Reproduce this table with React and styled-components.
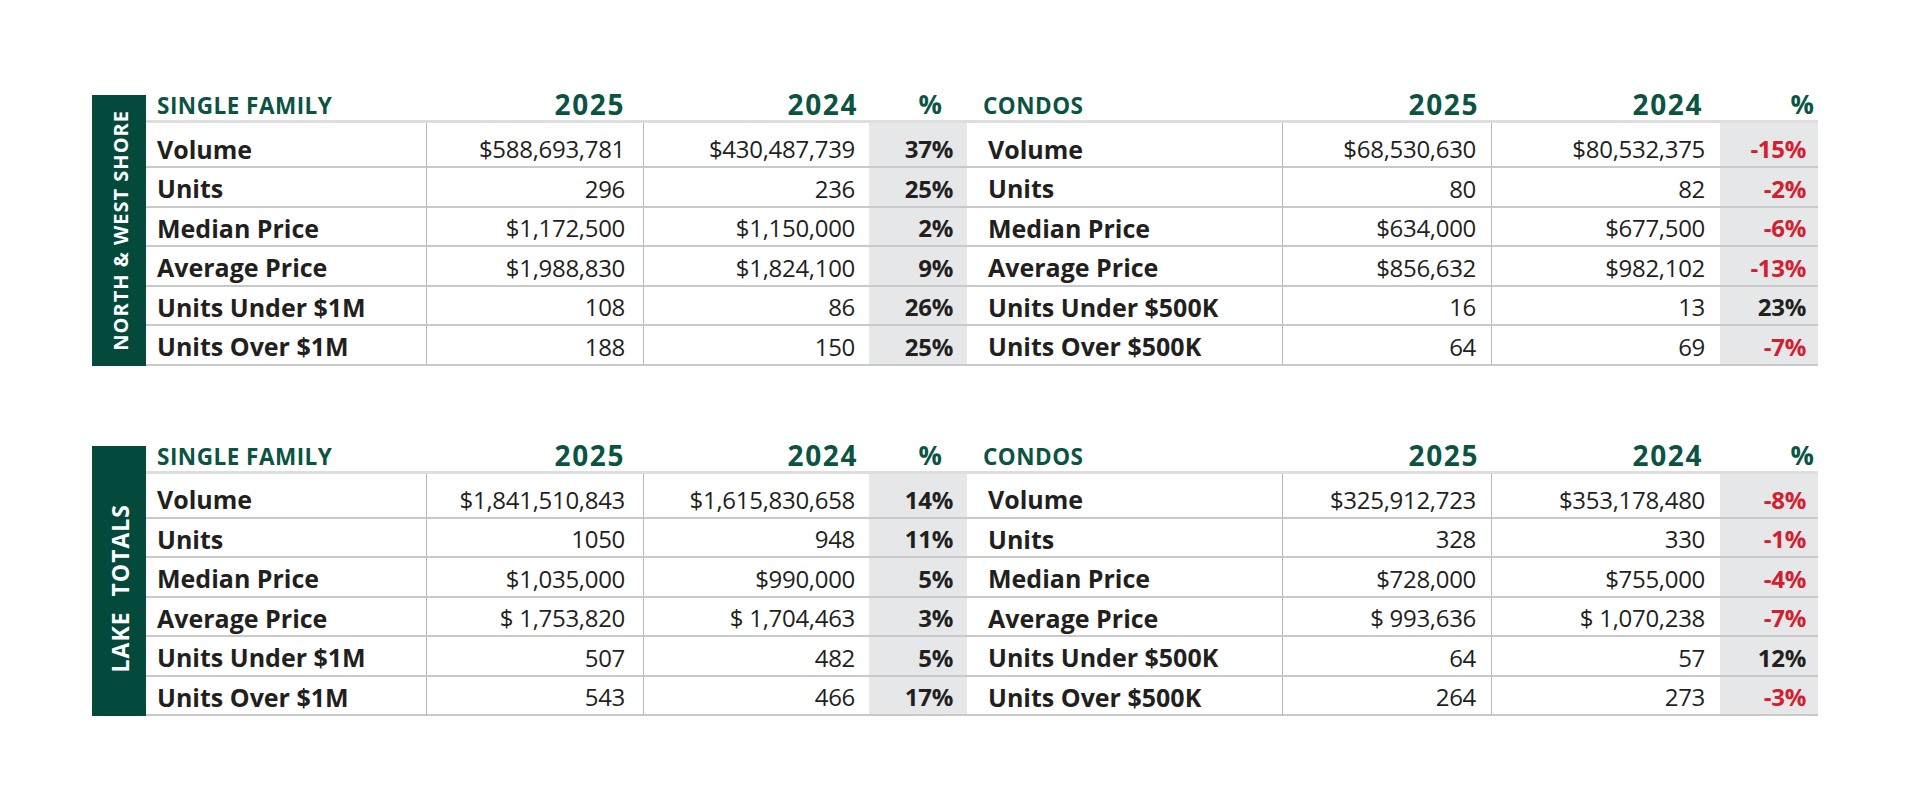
import React from 'react';
import styled, { createGlobalStyle } from 'styled-components';

const GlobalStyle = createGlobalStyle`
  html, body {
    margin: 0;
    padding: 0;
    background: #ffffff;
  }
  body {
    font-family: 'Open Sans', 'Liberation Sans', sans-serif;
    color: #231f20;
  }
`;

const Page = styled.div`
  width: 1920px;
  height: 803px;
  box-sizing: border-box;
  padding: 95px 0 0 92px;
  display: flex;
  flex-direction: column;
  gap: 80px;
`;

const Table = styled.div`
  display: flex;
  align-items: stretch;
`;

const SideBar = styled.div`
  width: 54px;
  background: #034a3c;
  display: flex;
  align-items: center;
  justify-content: center;
  padding-top: ${p => p.shift || 0}px;
  box-sizing: border-box;
`;

const SideLabel = styled.span`
  writing-mode: vertical-rl;
  transform: rotate(180deg);
  color: #ffffff;
  font-weight: 700;
  font-size: ${p => p.size}px;
  letter-spacing: 1px;
  word-spacing: ${p => p.wordGap}px;
  white-space: nowrap;
  margin-left: 2px;
`;

const Grid = styled.div`
  display: grid;
  grid-template-columns: 280px 217px 226px 98px 315px 209px 229px 98px;
  grid-template-rows: 28px 45px repeat(5, 39.5px);
`;

const HeadCell = styled.div`
  display: flex;
  align-items: flex-end;
  justify-content: ${p => (p.left ? 'flex-start' : 'flex-end')};
  padding: 0 ${p => p.pr || 0}px 3px ${p => p.pl || 0}px;
  border-bottom: 3px solid #dedede;
  color: #0b5444;
  font-weight: 700;
  white-space: nowrap;
`;

const SectionTitle = styled.span`
  font-size: 22.5px;
  letter-spacing: 0.5px;
  line-height: 22px;
`;

const YearTitle = styled.span`
  font-size: 28px;
  letter-spacing: 1.6px;
  line-height: 26px;
`;

const PctTitle = styled.span`
  font-size: 26px;
  line-height: 26px;
`;

const Cell = styled.div`
  display: flex;
  align-items: center;
  justify-content: ${p => (p.left ? 'flex-start' : 'flex-end')};
  padding: ${p => (p.first ? 8 : 3)}px ${p => p.pr || 0}px 0 ${p => p.pl || 0}px;
  border-bottom: 2px solid #c9c9c9;
  border-left: ${p => (p.divider ? '1px solid #b8b8b8' : 'none')};
  background: ${p => (p.shade ? '#e6e7e8' : 'transparent')};
  white-space: nowrap;
`;

const Label = styled.span`
  font-size: 25px;
  font-weight: 700;
`;

const Value = styled.span`
  font-size: 24px;
  font-weight: 400;
  letter-spacing: -0.3px;
`;

const Change = styled.span`
  font-size: 24px;
  font-weight: 700;
  letter-spacing: -0.3px;
  color: ${p => (p.down ? '#d1202f' : '#231f20')};
`;

const sfLabels = ['Volume', 'Units', 'Median Price', 'Average Price', 'Units Under $1M', 'Units Over $1M'];
const condoLabels = ['Volume', 'Units', 'Median Price', 'Average Price', 'Units Under $500K', 'Units Over $500K'];

const regions = [
  {
    name: 'NORTH & WEST SHORE',
    size: 20,
    wordGap: 0,
    shift: 0,
    sf: [
      ['$588,693,781', '$430,487,739', '37%'],
      ['296', '236', '25%'],
      ['$1,172,500', '$1,150,000', '2%'],
      ['$1,988,830', '$1,824,100', '9%'],
      ['108', '86', '26%'],
      ['188', '150', '25%'],
    ],
    condo: [
      ['$68,530,630', '$80,532,375', '-15%'],
      ['80', '82', '-2%'],
      ['$634,000', '$677,500', '-6%'],
      ['$856,632', '$982,102', '-13%'],
      ['16', '13', '23%'],
      ['64', '69', '-7%'],
    ],
  },
  {
    name: 'LAKE TOTALS',
    size: 23,
    wordGap: 8,
    shift: 14,
    sf: [
      ['$1,841,510,843', '$1,615,830,658', '14%'],
      ['1050', '948', '11%'],
      ['$1,035,000', '$990,000', '5%'],
      ['$ 1,753,820', '$ 1,704,463', '3%'],
      ['507', '482', '5%'],
      ['543', '466', '17%'],
    ],
    condo: [
      ['$325,912,723', '$353,178,480', '-8%'],
      ['328', '330', '-1%'],
      ['$728,000', '$755,000', '-4%'],
      ['$ 993,636', '$ 1,070,238', '-7%'],
      ['64', '57', '12%'],
      ['264', '273', '-3%'],
    ],
  },
];

function RegionTable({ region }) {
  return (
    <Table>
      <SideBar shift={region.shift}>
        <SideLabel size={region.size} wordGap={region.wordGap}>{region.name}</SideLabel>
      </SideBar>
      <Grid>
        <HeadCell left pl={11}><SectionTitle>SINGLE FAMILY</SectionTitle></HeadCell>
        <HeadCell pr={18}><YearTitle>2025</YearTitle></HeadCell>
        <HeadCell pr={11}><YearTitle>2024</YearTitle></HeadCell>
        <HeadCell pr={25}><PctTitle>%</PctTitle></HeadCell>
        <HeadCell left pl={16}><SectionTitle>CONDOS</SectionTitle></HeadCell>
        <HeadCell pr={12}><YearTitle>2025</YearTitle></HeadCell>
        <HeadCell pr={17}><YearTitle>2024</YearTitle></HeadCell>
        <HeadCell pr={4}><PctTitle>%</PctTitle></HeadCell>

        {sfLabels.map((label, i) => {
          const [a, b, pct] = region.sf[i];
          const [ca, cb, cpct] = region.condo[i];
          const first = i === 0;
          return (
            <React.Fragment key={label}>
              <Cell first={first} left pl={11}><Label>{label}</Label></Cell>
              <Cell first={first} divider pr={18}><Value>{a}</Value></Cell>
              <Cell first={first} divider pr={14}><Value>{b}</Value></Cell>
              <Cell first={first} shade pr={14}><Change down={pct.startsWith('-')}>{pct}</Change></Cell>
              <Cell first={first} left pl={21}><Label>{condoLabels[i]}</Label></Cell>
              <Cell first={first} divider pr={15}><Value>{ca}</Value></Cell>
              <Cell first={first} divider pr={15}><Value>{cb}</Value></Cell>
              <Cell first={first} shade pr={12}><Change down={cpct.startsWith('-')}>{cpct}</Change></Cell>
            </React.Fragment>
          );
        })}
      </Grid>
    </Table>
  );
}

export default function App() {
  return (
    <>
      <GlobalStyle />
      <Page>
        {regions.map(r => (
          <RegionTable key={r.name} region={r} />
        ))}
      </Page>
    </>
  );
}
